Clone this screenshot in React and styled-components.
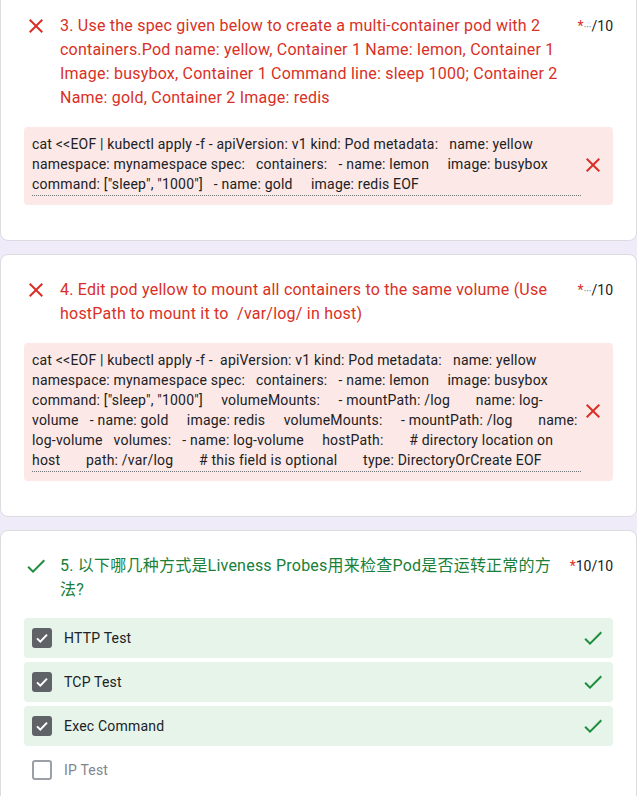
import styled, { createGlobalStyle } from "styled-components";

const GlobalStyle = createGlobalStyle`
    body {
        margin: 0;
        background: #f0ebf8;
        font-family: Roboto, "Noto Sans CJK SC", Arial, sans-serif;
        color: #202124;
    }
`

const Page = styled.div`
    display: flex;
    flex-direction: column;
    gap: 13px;
    margin-top: -10px;
`

const Card = styled.div`
    background: #fff;
    border: 1px solid #dadce0;
    border-radius: 8px;
    padding: 23px 23px 35px 23px;
`

const Header = styled.div`
    display: flex;
    align-items: flex-start;
`

const StatusIcon = styled.div`
    width: 24px;
    height: 24px;
    margin-right: 12px;
    flex: none;
    svg { display: block; }
`

const Title = styled.div`
    flex: 1;
    font-family: Roboto, "Noto Sans CJK SC", sans-serif;
    font-size: 16px;
    line-height: 24px;
    letter-spacing: 0.22px;
    white-space: pre-wrap;
    color: ${props => props.color};
`

const Points = styled.div`
    flex: none;
    margin-left: 16px;
    font-size: 14px;
    line-height: 24px;
    color: #202124;
`

const Star = styled.span`
    color: #d93025;
`

const Dots = styled.span`
    color: #70757a;
    font-size: 10px;
`

const AnswerBox = styled.div`
    display: flex;
    align-items: center;
    margin-top: 17px;
    padding: 7px 8px 9px 8px;
    background: #fce8e6;
    border-radius: 4px;
`

const AnswerText = styled.div`
    flex: 1;
    font-size: 14px;
    line-height: 20px;
    letter-spacing: 0.2px;
    white-space: pre-wrap;
    color: #202124;
    border-bottom: 1px dotted #70757a;
    padding-bottom: 1px;
`

const AnswerMark = styled(StatusIcon)`
    margin: 0;
`

const Options = styled.div`
    display: flex;
    flex-direction: column;
    gap: 4px;
    margin-top: 16px;
`

const Option = styled.div`
    display: flex;
    align-items: center;
    height: 40px;
    padding: 0 8px;
    border-radius: 4px;
    background: ${props => props.$correct ? "#e6f4ea" : "transparent"};
`

const Box = styled.div`
    width: 20px;
    height: 20px;
    box-sizing: border-box;
    border-radius: 3px;
    margin-right: 12px;
    display: flex;
    align-items: center;
    justify-content: center;
    background: ${props => props.$checked ? "#5f6368" : "#fff"};
    border: ${props => props.$checked ? "none" : "2px solid #9aa0a6"};
`

const OptionLabel = styled.div`
    flex: 1;
    font-size: 14px;
    letter-spacing: 0.2px;
    color: ${props => props.$muted ? "#80868b" : "#202124"};
`

const CloseIcon = ({ size = 24 }) => (
    <svg width={size} height={size} viewBox="0 0 24 24" fill="#d93025">
        <path d="M19 6.41L17.59 5 12 10.59 6.41 5 5 6.41 10.59 12 5 17.59 6.41 19 12 13.41 17.59 19 19 17.59 13.41 12z" />
    </svg>
)

const CheckIcon = ({ size = 24, color = "#1e8e3e" }) => (
    <svg width={size} height={size} viewBox="0 0 24 24" fill={color}>
        <path d="M9 16.17L4.83 12l-1.42 1.41L9 19 21 7l-1.41-1.41z" />
    </svg>
)

const BoxTick = () => (
    <svg width="16" height="16" viewBox="0 0 24 24" fill="none" stroke="#fff" strokeWidth="3">
        <path d="M4.5 12.5l5 5L19.5 7" />
    </svg>
)

const answer3 = `cat <<EOF | kubectl apply -f - apiVersion: v1 kind: Pod metadata:   name: yellow namespace: mynamespace spec:   containers:   - name: lemon     image: busybox command: ["sleep", "1000"]   - name: gold     image: redis EOF`

const answer4 = `cat <<EOF | kubectl apply -f -  apiVersion: v1 kind: Pod metadata:   name: yellow namespace: mynamespace spec:   containers:   - name: lemon     image: busybox command: ["sleep", "1000"]     volumeMounts:     - mountPath: /log       name: log-volume   - name: gold     image: redis     volumeMounts:     - mountPath: /log       name: log-volume   volumes:   - name: log-volume     hostPath:       # directory location on host       path: /var/log       # this field is optional       type: DirectoryOrCreate EOF`

const options = [
    { label: "HTTP Test", checked: true },
    { label: "TCP Test", checked: true },
    { label: "Exec Command", checked: true },
    { label: "IP Test", checked: false },
]

const App = () => {
    return (
        <>
            <GlobalStyle />
            <Page>
                <Card>
                    <Header>
                        <StatusIcon><CloseIcon /></StatusIcon>
                        <Title color="#d93025">3. Use the spec given below to create a multi-container pod with 2 containers.Pod name: yellow, Container 1 Name: lemon, Container 1 Image: busybox, Container 1 Command line: sleep 1000; Container 2 Name: gold, Container 2 Image: redis</Title>
                        <Points><Star>*</Star><Dots>···</Dots>/10</Points>
                    </Header>
                    <AnswerBox>
                        <AnswerText>{answer3}</AnswerText>
                        <AnswerMark><CloseIcon /></AnswerMark>
                    </AnswerBox>
                </Card>
                <Card>
                    <Header>
                        <StatusIcon><CloseIcon /></StatusIcon>
                        <Title color="#d93025">4. Edit pod yellow to mount all containers to the same volume (Use hostPath to mount it to  /var/log/ in host)</Title>
                        <Points><Star>*</Star><Dots>···</Dots>/10</Points>
                    </Header>
                    <AnswerBox>
                        <AnswerText>{answer4}</AnswerText>
                        <AnswerMark><CloseIcon /></AnswerMark>
                    </AnswerBox>
                </Card>
                <Card>
                    <Header>
                        <StatusIcon><CheckIcon /></StatusIcon>
                        <Title color="#188038">5. 以下哪几种方式是Liveness Probes用来检查Pod是否运转正常的方法?</Title>
                        <Points><Star>*</Star>10/10</Points>
                    </Header>
                    <Options>
                        {options.map(o => (
                            <Option key={o.label} $correct={o.checked}>
                                <Box $checked={o.checked}>
                                    {o.checked && <BoxTick />}
                                </Box>
                                <OptionLabel $muted={!o.checked}>{o.label}</OptionLabel>
                                {o.checked && <CheckIcon />}
                            </Option>
                        ))}
                    </Options>
                </Card>
            </Page>
        </>
    );
}

export default App;
